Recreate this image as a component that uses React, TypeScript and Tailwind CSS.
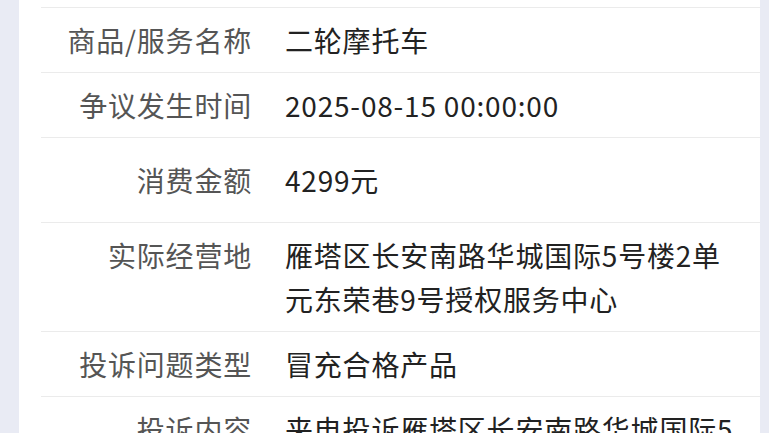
const rows = [
  { label: "商品/服务名称", value: "二轮摩托车", pad: "py-[10px]" },
  { label: "争议发生时间", value: "2025-08-15 00:00:00", pad: "py-[10px]" },
  { label: "消费金额", value: "4299元", pad: "py-[20px]" },
  { label: "实际经营地", value: "雁塔区长安南路华城国际5号楼2单元东荣巷9号授权服务中心", pad: "py-[10px]" },
  { label: "投诉问题类型", value: "冒充合格产品", pad: "py-[10px]" },
  { label: "投诉内容", value: "来电投诉雁塔区长安南路华城国际5号楼2单元东荣巷9号授权服务中心", pad: "py-[10px]" },
];

export default function App() {
  return (
    <div
      className="h-[433px] w-[769px] overflow-hidden bg-[#e9ebf4]"
      style={{ fontFamily: '"Noto Sans CJK SC", "Noto Sans", sans-serif' }}
    >
      <div className="ml-[19px] mr-[9px] h-full bg-white pt-[7px]">
        {rows.map((row) => (
          <div key={row.label} className="ml-[22px] border-t border-[#ebebeb]">
            <div className={`flex ${row.pad}`}>
              <div className="w-[211px] shrink-0 text-right text-[28px] leading-[44px] tracking-[0.8px] text-[#555555]">
                {row.label}
              </div>
              <div className="ml-[33px] flex-1 pr-[24px] text-[28px] leading-[44px] tracking-[0.8px] text-[#222222]">
                {row.value}
              </div>
            </div>
          </div>
        ))}
      </div>
    </div>
  );
}
